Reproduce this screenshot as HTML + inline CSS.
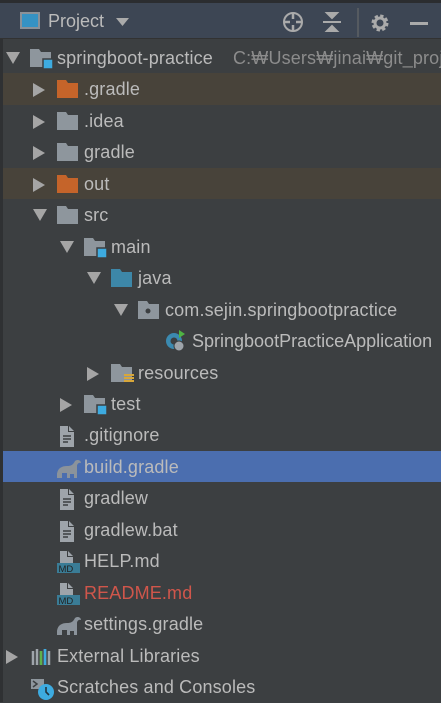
<!DOCTYPE html><html><head><style>
body{margin:0;width:441px;height:702px;background:#3c3f41;overflow:hidden;font-family:"Liberation Sans","Noto Sans CJK KR",sans-serif;position:relative}
.hdr{position:absolute;left:0;top:0;width:441px;height:39px;background:#3d4654;border-top:3px solid #2b2d30;box-sizing:border-box;border-bottom:1px solid #323232}
.lb{position:absolute;left:0;top:39px;width:3px;height:663px;background:#2f3133}
.row{position:absolute;left:3px;width:438px;height:31.5px;overflow:hidden}
.t{position:absolute;top:5px;font-size:18px;letter-spacing:0.15px;color:#bbbbbb;white-space:nowrap;line-height:23px}
.ar{position:absolute;top:9px}
.ic{position:absolute;top:6px}
</style></head><body>
<div class="hdr">
<svg style="position:absolute;left:19px;top:8px" width="22" height="20"><rect x="1" y="1" width="20" height="17" fill="#8a9199"/><rect x="3" y="3" width="16" height="13" fill="#3592c4"/></svg>
<div style="position:absolute;left:48px;top:8px;font-size:18px;color:#bbb">Project</div>
<svg style="position:absolute;left:116px;top:15px" width="14" height="9"><path d="M0 0H13L6.5 8Z" fill="#aaa"/></svg>
<svg style="position:absolute;left:282px;top:8px" width="22" height="22"><circle cx="11" cy="11" r="9" fill="none" stroke="#aaa" stroke-width="2"/><path d="M11 2V8M11 14V20M2 11H8M14 11H20" stroke="#aaa" stroke-width="2.5"/></svg>
<svg style="position:absolute;left:322px;top:9px" width="20" height="22"><path d="M5 1L10 6L15 1ZM1 10H19M5 19L10 14L15 19Z" stroke="#aaa" fill="#aaa" stroke-width="2"/></svg>
<div style="position:absolute;left:357px;top:5px;width:2px;height:29px;background:#555a60"></div>
<svg style="position:absolute;left:370px;top:10px" width="20" height="20"><circle cx="10" cy="10" r="6.5" fill="none" stroke="#aaa" stroke-width="4" stroke-dasharray="3 2.1"/><circle cx="10" cy="10" r="5" fill="none" stroke="#aaa" stroke-width="3"/></svg>
<div style="position:absolute;left:410px;top:19px;width:18px;height:3px;background:#aaa"></div>
</div>
<div class="lb"></div>
<div id="tree"></div>
<script>
function arrow(open){return open?'<svg width="16" height="14"><path d="M1 1H15L8 13Z" fill="#a5a5a5"/></svg>':'<svg width="14" height="16"><path d="M1 1V15L13 8Z" fill="#a5a5a5"/></svg>'}
function folder(c,extra){return '<svg width="26" height="22"><path d="M0 1H9L11 4H21V19H0Z" fill="'+c+'"/>'+(extra||'')+'</svg>'}
const blue='<rect x="13" y="11" width="10" height="10" fill="#3dabe0" stroke="#3c3f41" stroke-width="1.5"/>';
const file='<svg width="26" height="24"><path d="M3 1H11V7H17V22H3Z M12 1L17 6H12Z" fill="#9ea4aa"/><path d="M6 11H14M6 14H14M6 17H11" stroke="#3c3f41" stroke-width="1.5"/></svg>';
const md='<svg width="26" height="24"><path d="M3 0H10V6H16V12H3Z M11 0L16 5H11Z" fill="#9ea4aa"/><rect x="0" y="12" width="23" height="10" fill="#3a7c96"/><text x="1.5" y="21" font-size="9.5" fill="#222" font-family="Liberation Sans">MD</text></svg>';
const ele='<svg width="26" height="22"><path d="M0 21C-1 12 4 9 10 9C14 9 16 8 18 4C20 2 24 3 24 6C22 5 20 7 20 9V21H17V17H13V21H10V16H5V21Z" fill="#8b939b"/></svg>';
const rows=[
[0,1,folder('#8e969d',blue),'springboot-practice',null],
[1,0,folder('#c5642a'),'.gradle',null,'#48433a'],
[1,0,folder('#8e969d'),'.idea'],
[1,0,folder('#8e969d'),'gradle'],
[1,0,folder('#c5642a'),'out',null,'#48433a'],
[1,1,folder('#8e969d'),'src'],
[2,1,folder('#8e969d',blue),'main'],
[3,1,folder('#3d87a8'),'java'],
[4,1,folder('#8e969d','<circle cx="10" cy="11" r="2.5" fill="#3c3f41"/>'),'com.sejin.springbootpractice'],
[5,-1,'<svg width="26" height="24"><circle cx="9" cy="12" r="8" fill="#3b8ab0"/><circle cx="9" cy="12" r="3.5" fill="#3c3f41"/><path d="M14 1V9L20 5Z" fill="#4fb343"/><circle cx="14" cy="17" r="5" fill="#9ea4aa" stroke="#3c3f41"/></svg>','SpringbootPracticeApplication'],
[3,0,folder('#8e969d','<path d="M13 12H23M13 15H23M13 18H23" stroke="#d8a73a" stroke-width="2"/>'),'resources'],
[2,0,folder('#8e969d',blue),'test'],
[1,-1,file,'.gitignore'],
[1,-1,ele,'build.gradle',null,'#4b6eaf'],
[1,-1,file,'gradlew'],
[1,-1,file,'gradlew.bat'],
[1,-1,md,'HELP.md'],
[1,-1,md,'README.md','#d0564b'],
[1,-1,ele,'settings.gradle'],
[0,0,'<svg width="26" height="22"><path d="M3 5V19M7 3V19M11 5V19M15 3V19M19 5V19" stroke-width="2.5" stroke="#9ea4aa"/><path d="M11 5V19" stroke="#5fb14b" stroke-width="2.5"/><path d="M15 3V19" stroke="#3dabe0" stroke-width="2.5"/></svg>','External Libraries'],
[0,-1,'<svg width="26" height="24"><path d="M1 2H14V12H1Z" fill="#8e969d"/><path d="M3 4L7 7L3 10" stroke="#3c3f41" fill="none" stroke-width="1.5"/><circle cx="16" cy="15" r="8" fill="#3dabe0"/><path d="M16 10V15L19 18" stroke="#22343f" stroke-width="1.6" fill="none"/></svg>','Scratches and Consoles']];
let h='';
rows.forEach((r,i)=>{const [lv,op,ic,txt,col,bg]=r;const top=42+i*31.45;const base=2+lv*27;
let ax=base, ix=base+25, tx=base+52;
h+='<div class="row" style="top:'+top+'px;'+(bg?'background:'+bg:'')+'">';
if(op>=0)h+='<div class="ar" style="left:'+ax+'px">'+arrow(op==1)+'</div>';
h+='<div class="ic" style="left:'+(ix)+'px;'+(i==9?'top:4px':'')+'">'+ic+'</div>';
h+='<div class="t" style="left:'+tx+'px;'+(col?'color:'+col:'')+(i==9?';letter-spacing:0':'')+'">'+txt+'</div>';
if(i==0)h+='<div class="t" style="left:230px;color:#8c8c8c">C:₩Users₩jinai₩git_project</div>';
h+='</div>';});
document.getElementById('tree').innerHTML=h;
</script>
</body></html>
